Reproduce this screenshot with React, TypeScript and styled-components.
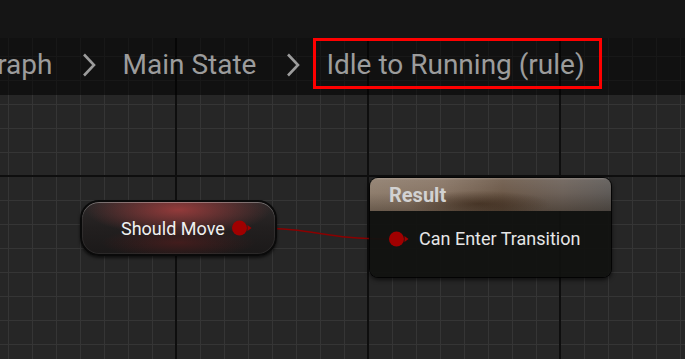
import React from "react";
import styled, { createGlobalStyle } from "styled-components";

const GlobalStyle = createGlobalStyle`
  html, body { margin: 0; padding: 0; background: #151515; }
  body { font-family: Roboto, "Noto Sans", "Liberation Sans", sans-serif; }
  * { box-sizing: border-box; }
`;

const Canvas = styled.div`
  position: relative;
  width: 685px;
  height: 359px;
  overflow: hidden;
  display: flex;
  flex-direction: column;
  background-color: #262626;
  background-image:
    linear-gradient(to right, #0e0e0e 0 2px, transparent 2px),
    linear-gradient(to bottom, #0e0e0e 0 2px, transparent 2px),
    linear-gradient(to right, #353535 0 1px, transparent 1px),
    linear-gradient(to bottom, #353535 0 1px, transparent 1px);
  background-size: 192px 100%, 100% 192px, 24px 100%, 100% 24px;
  background-position: 175px 0, 0 175px, 8px 0, 0 8px;
`;

const TopBar = styled.div`
  height: 38px;
  flex: none;
  background: #151515;
`;

const CrumbBar = styled.div`
  height: 57px;
  flex: none;
  display: flex;
  align-items: center;
  padding-bottom: 4px;
  background: rgba(0, 0, 0, 0.55);
  color: #9c9c9c;
  font-size: 28px;
  line-height: 32px;
  white-space: nowrap;
`;

const Crumb = styled.span<{ $offset?: number }>`
  position: relative;
  margin-left: ${(p) => p.$offset ?? 0}px;
`;

const ActiveCrumb = styled(Crumb)`
  &::after {
    content: "";
    position: absolute;
    left: -13px;
    right: -17px;
    top: -11px;
    bottom: -8px;
    border: 3px solid #ff0000;
  }
`;

const Sep = styled.svg`
  flex: none;
  width: 16px;
  height: 24px;
  margin: 0 25px 0 29px;
`;

const Wire = styled.svg`
  position: absolute;
  left: 0;
  top: 0;
  width: 685px;
  height: 359px;
  pointer-events: none;
`;

const VarNode = styled.div`
  position: absolute;
  left: 80px;
  top: 200px;
  width: 197px;
  height: 56px;
  border-radius: 19px;
  border: 2px solid #0a0a0a;
  display: flex;
  align-items: center;
  padding-left: 39px;
  gap: 7px;
  color: #f0f0f0;
  font-size: 18px;
  background:
    radial-gradient(ellipse 48% 50% at 50% 15%, rgba(165, 62, 62, 0.85), rgba(120, 40, 40, 0) 100%),
    radial-gradient(ellipse 40% 30% at 50% 78%, rgba(110, 30, 30, 0.45), rgba(110, 30, 30, 0) 100%),
    linear-gradient(to bottom, #2d2929 0%, #221f1f 50%, #1b1919 100%);
  box-shadow:
    inset 0 1px 0 rgba(255, 255, 255, 0.28),
    inset 0 0 0 1px rgba(255, 255, 255, 0.07),
    0 2px 3px rgba(0, 0, 0, 0.6);
`;

const ResultNode = styled.div`
  position: absolute;
  left: 370px;
  top: 178px;
  width: 241px;
  height: 99px;
  border-radius: 8px;
  overflow: hidden;
  display: flex;
  flex-direction: column;
  background: rgba(17, 18, 16, 0.94);
  box-shadow: 0 0 0 1px rgba(0, 0, 0, 0.8), 0 2px 4px 1px rgba(0, 0, 0, 0.6);
`;

const Header = styled.div`
  height: 33px;
  flex: none;
  display: flex;
  align-items: center;
  padding-left: 19px;
  color: #d2d2d2;
  font-size: 20px;
  font-weight: 700;
  background:
    linear-gradient(to bottom, rgba(255, 255, 255, 0.16) 0, rgba(255, 255, 255, 0) 2px),
    linear-gradient(to bottom, rgba(255, 255, 255, 0.08) 0%, rgba(0, 0, 0, 0) 45%, rgba(20, 10, 0, 0.3) 100%),
    radial-gradient(ellipse 30% 40% at 45% 78%, rgba(50, 30, 15, 0.55), rgba(50, 30, 15, 0) 100%),
    linear-gradient(to right, #8f7e6e 0%, #887565 30%, #6e5b4b 55%, #6d625a 80%, #5f5b58 100%);
`;

const PinRow = styled.div`
  flex: 1;
  display: flex;
  align-items: center;
  padding-left: 19px;
  padding-bottom: 11px;
  gap: 10px;
  color: #e6e6e6;
  font-size: 18px;
`;

const PinIcon = styled.svg`
  flex: none;
  width: 20px;
  height: 16px;
`;

const Pin = () => (
  <PinIcon viewBox="0 0 20 16">
    <circle cx="7.5" cy="8" r="7.5" fill="#a00000" />
    <polygon points="15.5,5 19.5,8 15.5,11" fill="#a00000" />
  </PinIcon>
);

const Chevron = () => (
  <Sep viewBox="0 0 16 24">
    <polyline points="3,1.5 13,12 3,22.5" fill="none" stroke="#9c9c9c" strokeWidth="2.6" />
  </Sep>
);

export default function App() {
  return (
    <>
      <GlobalStyle />
      <Canvas>
        <TopBar />
        <CrumbBar>
          <Crumb $offset={-87}>AnimGraph</Crumb>
          <Chevron />
          <Crumb>Main State</Crumb>
          <Chevron />
          <ActiveCrumb>Idle to Running (rule)</ActiveCrumb>
        </CrumbBar>
        <Wire viewBox="0 0 685 359">
          <path d="M251 228 C 320 228, 320 239, 390 239" fill="none" stroke="#8a0000" strokeWidth="1.5" />
        </Wire>
        <VarNode>
          <span>Should Move</span>
          <Pin />
        </VarNode>
        <ResultNode>
          <Header>Result</Header>
          <PinRow>
            <Pin />
            <span>Can Enter Transition</span>
          </PinRow>
        </ResultNode>
      </Canvas>
    </>
  );
}
